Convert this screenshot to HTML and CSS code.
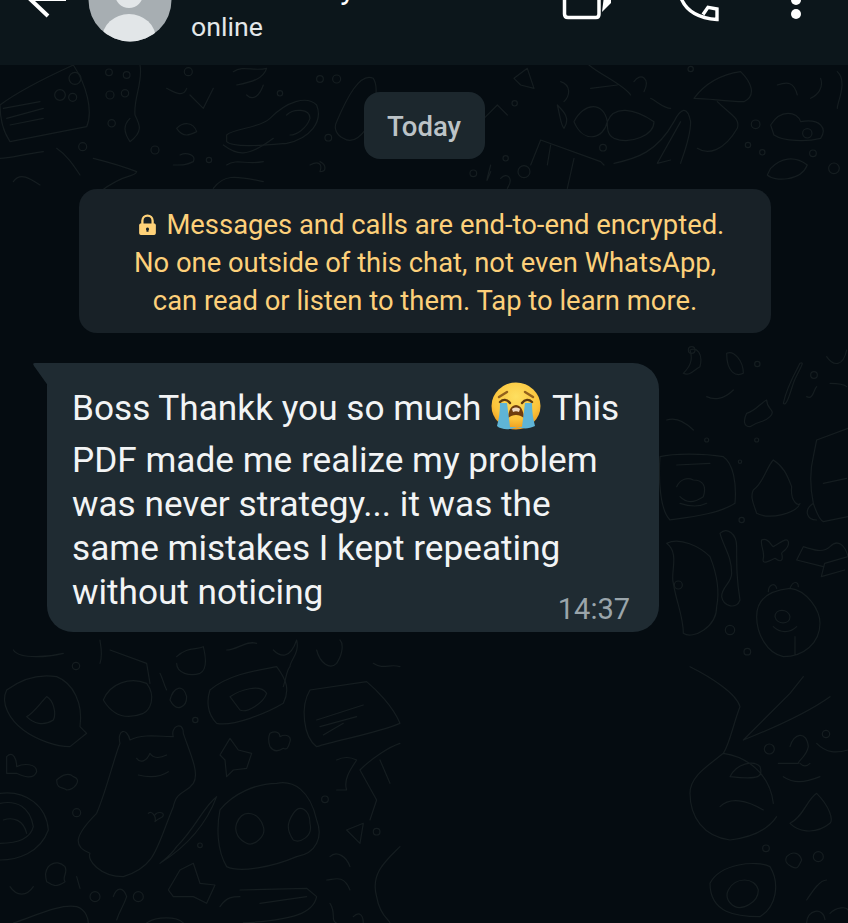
FILE: index.html
```html
<!DOCTYPE html>
<html lang="en">
<head>
<meta charset="utf-8">
<title>Chat</title>
<link rel="stylesheet" href="styles.css">
</head>
<body>
<div class="screen">
  <svg class="doodles" width="848" height="923" viewBox="0 0 848 923" fill="none" stroke="#151d20" stroke-width="3.6" stroke-linecap="round" stroke-linejoin="round" aria-hidden="true">
    <g transform="translate(0 640) scale(.3333)">
      <path d="M20 150C60 120 110 100 170 110C220 130 250 190 240 260L260 280L210 320C170 320 110 300 70 270C30 240 0 190 20 150zM80 230c20-10 40-40 60-60 20 10 30 50 20 70-30 20-60 10-80-10z"/>
      <path d="M310 180C330 130 390 110 440 130C470 170 450 210 430 220C380 240 340 230 310 180zM330 30L440 70 450 130M480 100c10 20 10 30 20 50M510 180c10-40 40-50 50-10 0 30-30 50-50 10z"/>
      <path d="M630 150C690 100 780 90 830 80C860 120 870 150 850 190 800 220 700 260 650 250 620 220 620 180 630 150zM690 170c30-20 90-40 110-10-10 30-60 60-80 50z"/>
      <path d="M930 150L1100 125C1130 150 1180 200 1200 250 1130 280 1010 300 950 320 910 290 900 200 930 150zM950 240L1090 195M960 260L1070 230M970 285L1030 250"/>
      <path d="M360 310C350 270 380 260 390 300C430 280 480 290 520 290 510 260 550 240 550 280 570 340 600 400 580 430 560 460 530 450 520 500 470 620 470 680 370 710 300 710 260 660 270 640 220 620 220 590 290 520 320 450 340 360 360 310zM410 355c10 15 30 10 40-15 10 15 30 15 50 5M415 405c20 5 60 10 90-10M445 520c10-10 25 10 20 25 15-15 25-10 25-20 0-10-20-10-25 0"/>
      <path d="M480 670C560 620 620 550 650 470 610 500 590 560 530 620 510 650 490 660 480 670z"/>
      <path d="M660 510C700 460 770 430 830 430 880 420 930 450 950 540 970 590 950 640 890 650 820 680 720 700 680 680 650 630 650 560 660 510zM710 550c20-50 70-30 80 10 10 30-30 60-50 50-20-10-40-30-30-60zM880 520c20-30 50-10 50 30 10 40-30 60-50 50-20-30-20-50 0-80z"/>
      <path d="M690 295L715 330 755 340 740 385 700 390 680 410 675 360 660 345zM810 280c20-10 30 0 30 10 20-10 35 0 30 15-5 20-10 25-20 20-15 10-30 10-40-5-5-15-5-30 0-40zM580 670L600 730 645 735 620 790 580 770 520 770 505 750 540 690z"/>
      <circle cx="285" cy="770" r="15"/><circle cx="415" cy="770" r="15"/><circle cx="230" cy="518" r="12"/><circle cx="586" cy="240" r="8"/><circle cx="228" cy="78" r="11"/><circle cx="600" cy="616" r="7"/><circle cx="975" cy="478" r="10"/><circle cx="1130" cy="575" r="10"/>
      <path d="M720 750L920 745 950 770C940 820 880 840 730 849M660 800C680 770 700 770 720 770M780 790L920 770"/>
      <path d="M0 460C80 450 140 500 145 570 120 640 50 660 0 660M0 490c50-10 90 10 100 70-10 40-50 50-100 50M10 540c30-10 60 0 70 40"/>
      <path d="M145 680c20-20 40-10 50 0 10 20-10 30 0 45-30 20-40 10-55 0-5-20-5-30 5-45zM20 350C40 330 50 360 50 380 70 370 110 370 110 395 100 420 70 410 50 400L20 400zM170 420c20-20 40-20 50-10 30 10 0 40-20 40-10-10-30 0-30-30z"/>
      <path d="M40 849C100 830 180 790 230 800 260 810 265 840 265 849M440 849c30-20 90-20 110 0M1010 360c20-10 40-10 60 0-20 30-40 60-30 90l-30 0M1080 390C1120 350 1170 320 1200 310M1080 390L1130 480 1110 540M1140 360L1170 430M1040 570l50-20-10 60zM1200 620C1160 660 1110 700 1130 770 1140 830 1170 840 1170 849M990 650c20-20 50 0 60 30M980 720c20 0 50-20 70 30"/>
      <path d="M300 70C310 40 300 10 300 0M530 50c30-30 60-20 80-30 10 40 10 70-10 80-30 10-70 0-70-30M680 30c30 0 60-30 90-20M820 30c20 20 50 30 70-30 10 40-20 60-20 80-10 10-10 30-20 60M950 30c10 40 40 60 60 40 20-30 20-60 10-70M1120 70c30 20 50 0 80 10M40 30c20 30 110 20 150 10M340 770c10-30 30-30 40 0-10 30-20 40-30 70M30 740c20 30 50 30 70 0M230 710l10 35M990 790c20 30 0 50 20 60M1060 830c20-20 30 0 30 19"/>
    </g>
    <g transform="translate(660 340) scale(.3333)">
      <path d="M0 350C40 340 130 340 190 350 220 370 230 430 225 490 180 520 100 530 30 540 0 510-5 420 0 350zM50 440c10-20 30-30 50-20 30 0 40 20 30 50-30 20-50 20-70 0M60 490c30 10 60 10 80 0M50 375l100-5"/>
      <path d="M280 450C310 430 320 380 340 360 370 380 380 400 395 440 390 490 420 500 420 490 410 520 330 540 290 520 280 490 270 470 280 450zM305 600c20-10 30 20 35 20 20-10 40-30 45-15 5 20-20 30-20 35 5 20 0 30-20 15-20 10-40 20-35 0 5-20-10-40-5-55z"/>
      <path d="M290 830C290 770 340 750 390 745 440 750 480 810 480 850 480 910 430 950 370 950 320 940 290 880 290 830zM325 755c0-20 20-30 25-10M390 745c10-25 25-20 25-5M345 830c0-25 40-25 45 0 0 25-40 25-45 0zM340 860c20 20 50 20 70 0M405 890v55"/>
      <path d="M460 350C450 390 450 440 460 490 470 520 480 540 490 545L564 530M460 350L470 300 564 265M490 430l70-15M460 490c-30 20-20 50 10 50"/>
      <path d="M20 610C60 590 120 620 150 650 170 700 180 750 170 800 170 860 100 900 70 880 70 830 50 790 40 730 30 700 60 640 20 610zM180 580c20-20 50 0 50 40 0 60 0 100 10 160-10 30-50 20-55-10 0-30 30-40 30-70 0-50-20-70-35-120z"/>
      <path d="M430 620c30 10 60 20 80 0 30-30 50 10 54 30l-70 20-10 40 70-20M430 620l-20 40 80 20"/>
      <path d="M70 100C90 80 100 60 90 30 110 20 130 40 120 80 100 90 90 110 70 100zM200 40c20-10 50 20 50 60-20 10-50 0-50-60zM260 220c30-10 40-30 60-40 0 30 30 30 10 50-20 20-30 10-60 30-20 0-20-20-10-40zM370 190C380 140 410 90 420 70 440 60 410 100 400 130 390 160 380 200 370 190zM500 50c20 30 50 30 60-20M440 170c20 10 20-20 30-30M510 130c20 0 40 0 50 10M20 240c30-10 60 10 80 30M140 170c20 10 50 10 80-20"/>
      <circle cx="95" cy="30" r="10"/><circle cx="292" cy="72" r="8"/><circle cx="462" cy="105" r="10"/><circle cx="140" cy="300" r="6"/><circle cx="240" cy="365" r="5"/><circle cx="245" cy="540" r="8"/><circle cx="290" cy="300" r="6"/><circle cx="55" cy="735" r="12"/><circle cx="210" cy="870" r="14"/><circle cx="262" cy="935" r="10"/>
    </g>
    <g transform="translate(0 65) scale(.3333)">
      <path d="M0 120C40 90 110 50 220 0 260 60 280 140 260 185L30 230C10 200 0 160 0 120zM10 130L120 110M20 160L130 130M30 180L130 160"/>
      <circle cx="225" cy="40" r="18"/><circle cx="180" cy="90" r="16"/><circle cx="218" cy="97" r="12"/><circle cx="327" cy="22" r="10"/><circle cx="380" cy="30" r="10"/><circle cx="330" cy="90" r="12"/><circle cx="375" cy="85" r="11"/><circle cx="335" cy="175" r="11"/><circle cx="465" cy="255" r="12"/><circle cx="627" cy="285" r="8"/><circle cx="840" cy="85" r="8"/><circle cx="985" cy="218" r="10"/><circle cx="1010" cy="42" r="12"/><circle cx="960" cy="42" r="10"/><circle cx="248" cy="245" r="12"/><circle cx="565" cy="20" r="12"/>
      <path d="M420 0C430 50 400 100 405 150 420 180 430 200 390 230 370 200 370 180 390 160M680 210C700 190 780 190 810 160 860 110 920 90 950 120 970 170 930 220 860 235 800 240 700 250 680 230zM860 150c20-20 70-20 70 10-10 30-40 50-60 50M1010 170C1040 100 1080 20 1120 40 1140 70 1120 130 1110 170 1090 210 1060 240 1030 220 1010 210 1000 190 1010 170z"/>
      <path d="M500 70c20 10 50 30 60 0M570 90L610 130 640 70M530 190c20-20 50-20 60 10-20 10-40 20-60-10M700 20c30-20 60 0 100-10-10 30-40 40-90 50M740 90c20 20 40 0 50-30M170 250c30 20 50 50 70 80M280 280c40 10 80 20 130 40-10 20-30 0-110 60M540 270c20-10 50 0 40 20-20 10-30 10-60 10M670 240c40 30 70 40 150-20M680 300c30-20 60 0 110-10M640 370c30-40 60-40 150-20M40 350c20-30 50-10 80 10M0 280c30 0 60-10 130-20M930 300c20-10 40-10 30 20M960 290c20 10 20 30 0 30"/>
    </g>
    <g transform="translate(424 65) scale(.3333)">
      <path d="M570 295C640 280 700 260 750 170 770 130 790 120 800 170 800 220 770 290 770 295M770 170L700 295 740 285M450 170C480 110 540 110 550 170 540 220 480 240 450 170zM550 170C570 120 630 130 690 170 690 210 620 240 570 220 550 210 550 190 550 170z"/>
      <path d="M810 100C840 60 880 30 950 20 980 50 1000 90 960 110 900 110 860 100 810 100zM880 110C920 150 950 160 940 190 900 260 850 270 820 250M1040 180C1070 130 1120 140 1130 170 1190 160 1210 190 1190 220 1150 230 1080 230 1050 210zM1040 310C1070 280 1110 270 1150 300 1130 350 1050 350 1030 330z"/>
      <path d="M320 300L350 225 530 290 540 300M380 240L370 300M450 280L430 370M270 40L310 10 330 70 290 60zM495 0C530 30 600 60 620 90M500 70L580 60M630 50c20-30 50-10 30 30M400 120C410 160 410 180 420 190 440 160 420 140 400 120zM180 160L220 120 250 150M200 320C180 370 190 340 200 300M230 340c20-20 40 0 20 30M1240 20C1272 50 1240 110 1240 130M680 100c20 10 40 30 60 30M1060 60c30-10 50-10 60 30M1160 100c20-10 40-30 30-60M410 50c30 10 30 40 10 60"/>
      <circle cx="272" cy="115" r="8"/><circle cx="995" cy="178" r="13"/><circle cx="1167" cy="265" r="10"/><circle cx="1230" cy="310" r="16"/><circle cx="537" cy="248" r="10"/><circle cx="300" cy="320" r="18"/><circle cx="148" cy="325" r="10"/><circle cx="800" cy="12" r="8"/><circle cx="1150" cy="205" r="14"/><circle cx="245" cy="280" r="8"/><circle cx="972" cy="240" r="8"/><circle cx="1015" cy="262" r="8"/>
    </g>
    <g transform="translate(690 660) scale(.3333)">
      <path d="M0 20C60 50 140 100 150 140 130 190 120 250 100 280 50 320 0 350 0 400 0 470 40 530 120 540 200 530 240 500 260 470M100 280C170 290 240 340 250 430M160 240L300 100 340 50 300 100 220 180M160 240C260 200 350 160 420 110M120 350c20-40 70-50 90-30 10 30 0 40-90 30M90 440c30-30 80-20 130 10"/>
      <path d="M300 260c10-40 50-50 55 0-5 30-30 40-30 50l-60 0M330 310c10 10 20 10 30 0M300 490C340 470 350 420 380 400 420 440 430 480 420 490 370 530 320 510 300 490zM60 670C90 610 200 600 240 620 270 670 260 740 210 770 140 770 60 760 60 670zM115 690c20-40 80-40 90 0 0 40-50 60-70 50-20-10-30-30-20-50zM290 590c20-20 40-10 45 10-10 20-10 30-30 20-20-10-20-20-15-30zM350 720c20-30 40-60 60-60M350 789c0-40 50-50 55-10M420 760c20-20 50-20 54-10M380 250c30 30 60 30 94 20M280 350c30 20 60 20 110 0"/>
      <circle cx="238" cy="267" r="15"/><circle cx="228" cy="565" r="10"/><circle cx="385" cy="590" r="15"/><circle cx="408" cy="222" r="11"/>
    </g>
  </svg>
  <header class="topbar">
    <svg class="back" width="40" height="41" viewBox="0 0 40 41" aria-hidden="true">
      <path d="M40 -1H6M20 -14L4 -1l18 17" fill="none" stroke="#fff" stroke-width="4"/>
    </svg>
    <svg class="avatar" width="84" height="84" viewBox="0 0 84 84" aria-hidden="true">
      <defs><clipPath id="disc"><circle cx="42" cy="42" r="41.500"/></clipPath></defs>
      <circle cx="42" cy="42" r="41.500" fill="#a7aeb2"/>
      <circle cx="41" cy="36" r="14" fill="#e2e6e8"/>
      <ellipse cx="41" cy="81" rx="27" ry="25" fill="#e2e6e8" clip-path="url(#disc)"/>
    </svg>
    <div class="identity">
      <div class="name">Mr Anthony</div>
      <div class="status">online</div>
    </div>
    <div class="actions">
      <svg width="50" height="24" viewBox="0 0 50 24" aria-hidden="true">
        <path d="M2.500 -10V14q0 3.500 3.500 3.500h28q3 0 3-3.500V-10" fill="none" stroke="#fff" stroke-width="3.500"/>
        <path d="M40 12l9-9V-4H42z" fill="#fff"/>
      </svg>
      <svg width="44" height="24" viewBox="0 0 44 24" aria-hidden="true">
        <path d="M2 -2C6 8 16 18 38 19.500V9L29 7.300 24 14.500" fill="none" stroke="#fff" stroke-width="3.400"/>
      </svg>
      <svg width="12" height="24" viewBox="0 0 12 24" aria-hidden="true">
        <circle cx="6" cy="14" r="5" fill="#fff"/>
        <circle cx="6" cy="0" r="5" fill="#fff"/>
      </svg>
    </div>
  </header>
  <main class="chat">
    <div class="date">Today</div>
    <div class="notice">
      <svg class="lock" width="19" height="23" viewBox="0 0 18 22" aria-hidden="true">
        <path fill-rule="evenodd" d="M3 9V6.500a6 6 0 0 1 12 0V9h1a2 2 0 0 1 1 1.500v8a1.800 1.800 0 0 1-2 1.500H3a1.800 1.800 0 0 1-2-1.500v-8A2 2 0 0 1 2 9zm2.200 0h7.600V6.500a3.800 3.800 0 0 0-7.600 0zM9 13a1.500 1.500 0 0 0-1 2.600V17h2v-1.400A1.500 1.500 0 0 0 9 13z" fill="#ffd279"/>
      </svg>
      Messages and calls are end-to-end encrypted.<br>
      No one outside of this chat, not even WhatsApp,<br>
      can read or listen to them. Tap to learn more.
    </div>
    <div class="bubble">
      <svg class="tail" width="16" height="24" viewBox="0 0 16 24" aria-hidden="true"><path d="M16 0H2Q-1 0 1 3L16 24z" fill="#1f2b32"/></svg>
      <p class="first">Boss Thankk you so much <svg class="emoji" width="54" height="48" viewBox="0 0 54 48" aria-hidden="true">
        <defs><radialGradient id="face" cx="50%" cy="30%" r="70%"><stop offset="0" stop-color="#fedf60"/><stop offset=".7" stop-color="#fbc33a"/><stop offset="1" stop-color="#ee9a1c"/></radialGradient></defs>
        <ellipse cx="26" cy="24" rx="24.500" ry="23.500" fill="url(#face)"/>
        <path d="M9 15l8-5M43 15l-8-5" stroke="#93611c" stroke-width="2.400" fill="none" stroke-linecap="round"/>
        <path d="M10 20c3-3 7-3 10 1M32 21c3-4 7-4 10-1" stroke="#5d3a10" stroke-width="2.400" fill="none" stroke-linecap="round"/>
        <path d="M26 23c6 0 8 9 8 13-5-4-11-4-16 0 0-4 2-13 8-13z" fill="#6d3c0e"/>
        <path d="M22 27c2-2 6-2 8 0l-1 3c-2-1-4-1-6 0z" fill="#efd9c0"/>
        <path d="M10 21h7c1 8 2 16 3 24H27c-6 3-16 3-20-1 2-7 3-15 3-23zM35 21h7c0 8 1 16 3 23-6 3-12 3-18 1h5c1-8 2-16 3-24z" fill="#5fb4d6"/>
      </svg> This<br>PDF made me realize my problem</p>
      <p class="rest">was never strategy... it was the<br>same mistakes I kept repeating<br>without noticing</p>
      <time class="stamp">14:37</time>
    </div>
  </main>
</div>
</body>
</html>
```

FILE: styles.css
```css
html, body {
  margin: 0;
  padding: 0;
  background: #050c11;
}
.screen {
  position: relative;
  width: 848px;
  height: 923px;
  overflow: hidden;
  background: #050c11;
  font-family: Roboto, "Liberation Sans", sans-serif;
}
.doodles {
  position: absolute;
  top: 0;
  left: 0;
}
.topbar {
  position: relative;
  height: 65px;
  background: #0c161b;
  display: flex;
  align-items: flex-start;
  overflow: hidden;
}
.back {
  flex: none;
  margin-left: 26px;
  overflow: visible;
}
.avatar {
  flex: none;
  margin: -42px 0 0 22px;
}
.identity {
  margin: -28px 0 0 19px;
  color: #fff;
}
.name {
  font-size: 32px;
  line-height: 32px;
  height: 32px;
  white-space: nowrap;
}
.status {
  margin-top: 6px;
  font-size: 26.700px;
  line-height: 34px;
  color: #e3e7e9;
}
.actions {
  margin-left: auto;
  margin-right: 46px;
  display: flex;
  gap: 67px;
}
.actions svg {
  overflow: visible;
}
.chat {
  position: relative;
  display: flex;
  flex-direction: column;
  align-items: center;
  padding-top: 27px;
}
.date {
  width: 121px;
  height: 67px;
  display: flex;
  align-items: center;
  justify-content: center;
  padding-top: 1px;
  border-radius: 16px;
  background: #1c272d;
  color: #bcc3c7;
  font-size: 27.500px;
  font-weight: 500;
  box-sizing: border-box;
}
.notice {
  margin: 30px 0 0 2px;
  width: 692px;
  height: 144px;
  box-sizing: border-box;
  padding-top: 17px;
  background: #182127;
  border-radius: 18px;
  color: #fdd07a;
  font-size: 27.400px;
  line-height: 38px;
  text-align: center;
}
.lock {
  vertical-align: -3px;
  margin: 0 3px 0 12px;
}
.bubble {
  position: relative;
  align-self: flex-start;
  margin: 30px 0 0 47px;
  width: 612px;
  height: 269px;
  box-sizing: border-box;
  padding: 19px 0 0 25px;
  background: #1f2b32;
  border-radius: 0 26px 26px 26px;
  color: #f2f4f5;
  font-size: 35.200px;
  line-height: 44px;
}
.bubble p {
  margin: 0;
}
.bubble .first {
  line-height: 52px;
}
.bubble .rest {
  margin-top: -4px;
}
.tail {
  position: absolute;
  left: -14px;
  top: 0;
}
.emoji {
  vertical-align: -10px;
}
.stamp {
  position: absolute;
  right: 29px;
  bottom: 6px;
  font-size: 29px;
  line-height: 34px;
  color: #9aa5ab;
}
```
